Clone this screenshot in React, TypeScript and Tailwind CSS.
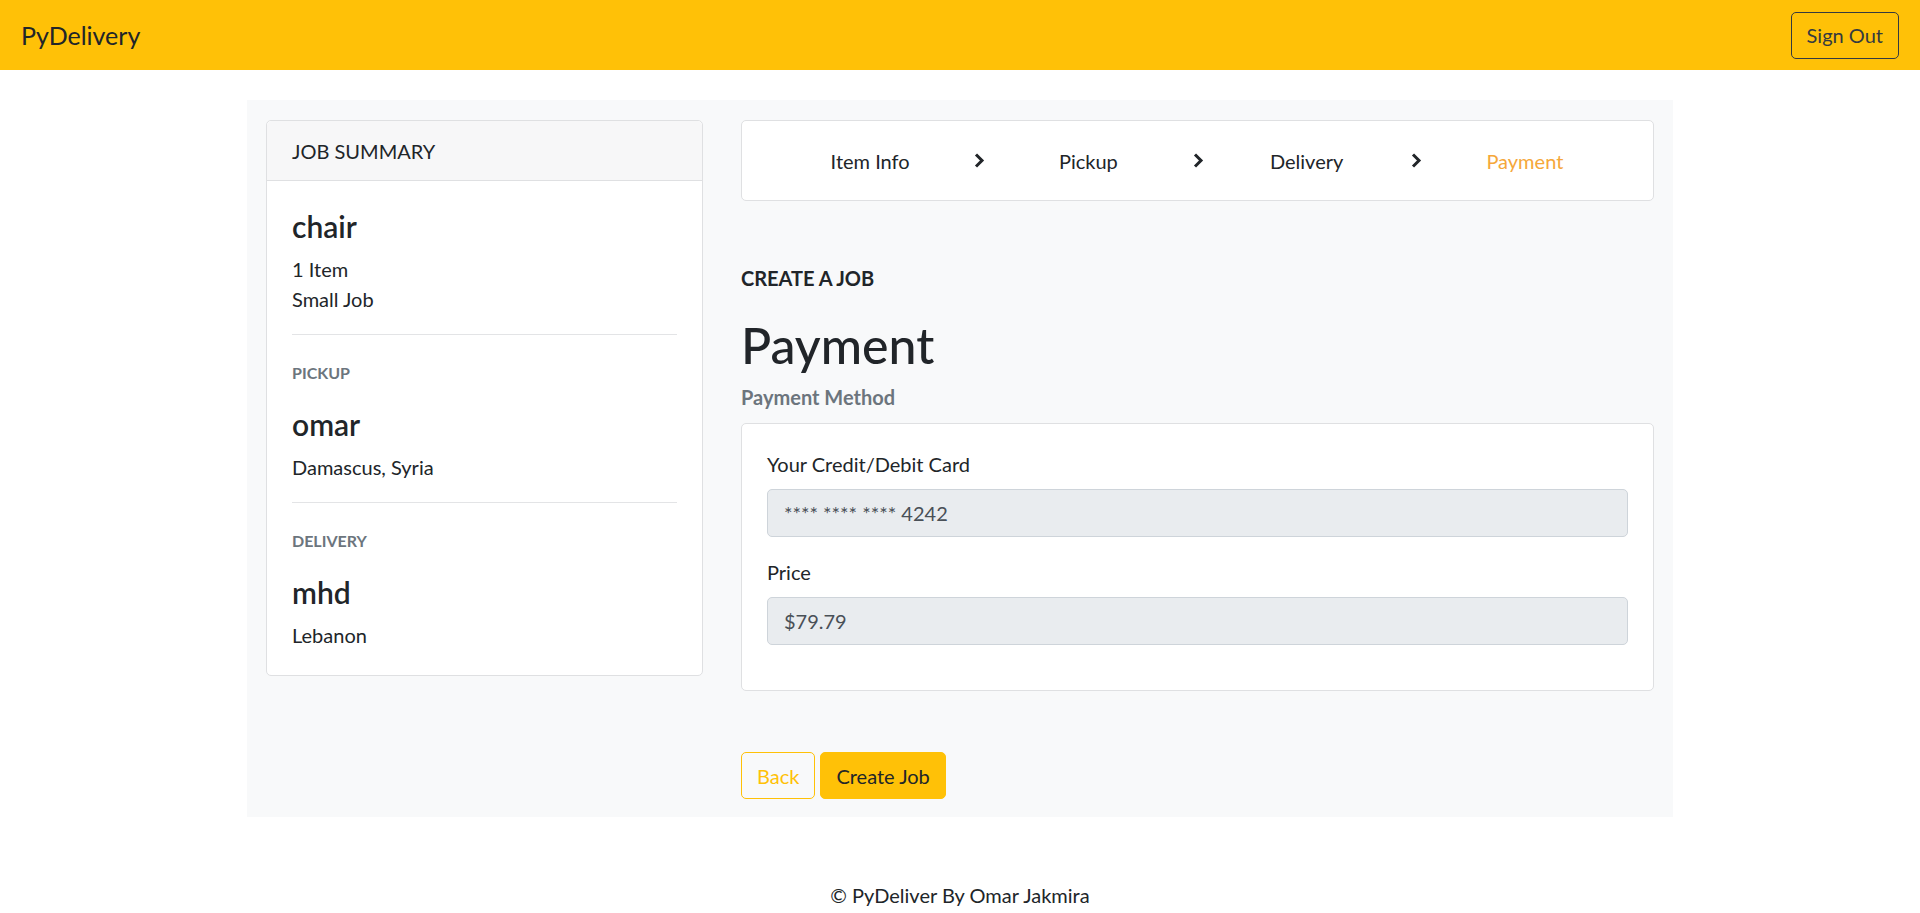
import { Fragment } from "react";

const STEPS = ["Item Info", "Pickup", "Delivery", "Payment"];

function Chevron() {
  return (
    <svg width="12" height="15" viewBox="0 0 12 15" fill="none" className="shrink-0">
      <path d="M3 1.5 L9 7.5 L3 13.5" stroke="#212529" strokeWidth="3" strokeLinejoin="miter" />
    </svg>
  );
}

function SummarySection({ label, name, place }: { label: string; name: string; place: string }) {
  return (
    <>
      <hr className="my-[20px] border-t border-[#e3e4e6]" />
      <div className="pt-[6px] text-[16px] leading-[24px] font-bold text-[#6c757d] uppercase">{label}</div>
      <div className="mt-[21px] mb-[10px] text-[30px] leading-[36px] font-semibold">{name}</div>
      <div className="leading-[30px]">{place}</div>
    </>
  );
}

function JobSummary() {
  return (
    <div className="w-[437px] shrink-0 bg-white border border-[#dfe0e2] rounded-[5px]">
      <div className="h-[60px] px-[25px] flex items-center bg-[#f7f7f8] border-b border-[#dfe0e2] rounded-t-[5px] leading-[30px]">
        JOB SUMMARY
      </div>
      <div className="px-[25px] pt-[27px] pb-[25px]">
        <div className="mb-[10px] text-[30px] leading-[36px] font-semibold">chair</div>
        <div className="leading-[30px]">1 Item</div>
        <div className="leading-[30px]">Small Job</div>
        <SummarySection label="Pickup" name="omar" place="Damascus, Syria" />
        <SummarySection label="Delivery" name="mhd" place="Lebanon" />
      </div>
    </div>
  );
}

function Stepper() {
  return (
    <div className="h-[81px] px-[19px] flex items-center bg-white border border-[#dfe0e2] rounded-[5px]">
      {STEPS.map((step, i) => (
        <Fragment key={step}>
          {i > 0 && (
            <div className="w-0 flex justify-center">
              <Chevron />
            </div>
          )}
          <div className={`flex-1 text-center leading-[30px] ${i === STEPS.length - 1 ? "text-[#f5a73a]" : "text-[#212529]"}`}>
            {step}
          </div>
        </Fragment>
      ))}
    </div>
  );
}

function Field({ label, value }: { label: string; value: string }) {
  return (
    <div className="mb-[20px]">
      <div className="mb-[10px] leading-[30px]">{label}</div>
      <div className="h-[48px] px-[16px] flex items-center bg-[#e9ecef] border border-[#ced4da] rounded-[5px] text-[#495057]">
        {value}
      </div>
    </div>
  );
}

export default function App() {
  return (
    <div className="min-h-screen bg-white text-[20px] text-[#212529] font-['Segoe_UI','Lato','Noto_Sans',sans-serif]">
      <nav className="h-[70px] px-[21px] flex items-center justify-between bg-[#ffc107]">
        <span className="text-[25px] leading-[30px] text-[#212529]">PyDelivery</span>
        <button className="h-[47px] px-[15px] border border-[#343a40] rounded-[5px] text-[#343a40] leading-[30px]">
          Sign Out
        </button>
      </nav>

      <main className="w-[1426px] mx-auto mt-[30px] px-[19px] pt-[20px] pb-[18px] bg-[#f8f9fa]">
        <div className="flex gap-[38px] items-start">
          <JobSummary />

          <div className="flex-1">
            <Stepper />

            <div className="mt-[62px] leading-[30px] font-bold">CREATE A JOB</div>
            <h1 className="mt-[22px] text-[50px] leading-[60px] font-medium">Payment</h1>
            <div className="mt-[10px] leading-[24px] font-bold text-[#6c757d]">Payment Method</div>

            <div className="mt-[14px] p-[25px] bg-white border border-[#dfe0e2] rounded-[5px]">
              <Field label="Your Credit/Debit Card" value="**** **** **** 4242" />
              <Field label="Price" value="$79.79" />
            </div>

            <div className="mt-[61px] flex gap-[5px]">
              <button className="h-[47px] px-[15px] border border-[#ffc107] rounded-[5px] text-[#ffc107] leading-[30px]">
                Back
              </button>
              <button className="h-[47px] px-[15px] border border-[#ffc107] bg-[#ffc107] rounded-[5px] text-[#212529] leading-[30px]">
                Create Job
              </button>
            </div>
          </div>
        </div>
      </main>

      <footer className="pt-[63px] pb-[5px] text-center leading-[30px]">© PyDeliver By Omar Jakmira</footer>
    </div>
  );
}
